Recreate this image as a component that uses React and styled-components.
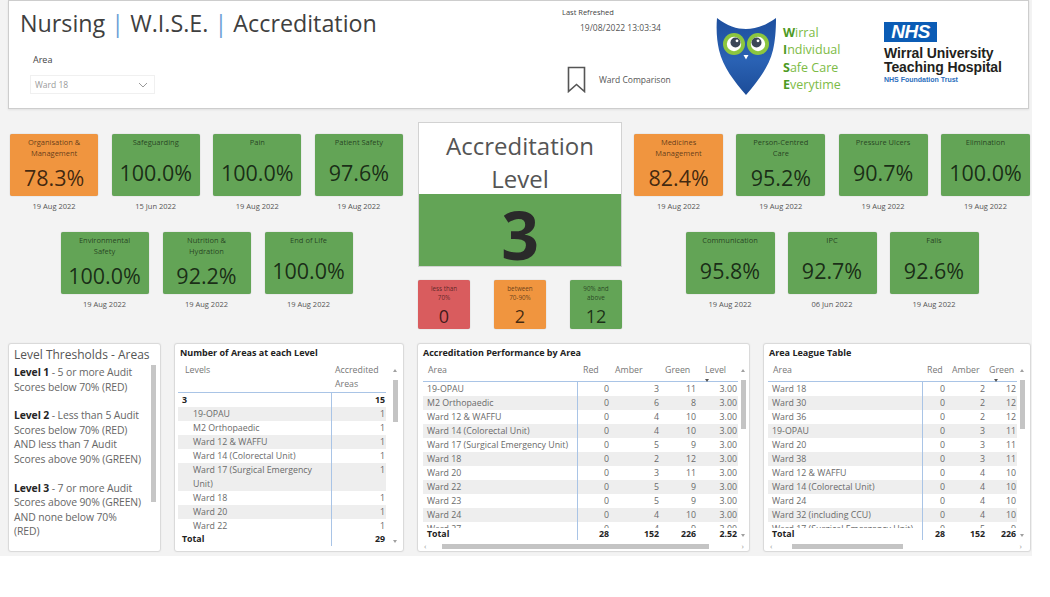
import React from 'react';
import styled, { createGlobalStyle } from 'styled-components';

const GREEN = '#63a456';
const ORANGE = '#f0953f';
const RED = '#d95c5e';
const LINE = '#a9c4e6';

const GlobalStyle = createGlobalStyle`
  * { box-sizing: border-box; }
  html, body { margin: 0; padding: 0; background: #ffffff; }
  body { font-family: "Open Sans", "Noto Sans", sans-serif; color: #333; }
`;

const Canvas = styled.div`
  width: 1032px;
  height: 556px;
  background: #f3f3f3;
  display: flex;
  flex-direction: column;
`;

/* ---------- header ---------- */

const Header = styled.header`
  margin-left: 8px;
  width: 1021px;
  height: 109px;
  background: #fff;
  border: 1px solid #cdcdcd;
  box-shadow: 0 1px 2px rgba(0, 0, 0, 0.08);
  display: flex;
`;

const TitleBlock = styled.div`
  width: 553px;
  padding: 6px 0 0 11px;
`;

const Title = styled.h1`
  margin: 0;
  font-size: 23.3px;
  font-weight: 400;
  line-height: 32px;
  color: #3f3f3f;
  white-space: nowrap;
`;

const Pipe = styled.span`
  color: #6b9fd6;
`;

const AreaLabel = styled.div`
  margin: 15px 0 0 13px;
  font-size: 9px;
  line-height: 12px;
  color: #444;
`;

const Dropdown = styled.div`
  margin: 9px 0 0 10px;
  width: 125px;
  height: 19px;
  border: 1px solid #f0f0f0;
  display: flex;
  align-items: center;
  justify-content: space-between;
  padding: 0 6px 0 4px;
  font-size: 8.5px;
  color: #9a9a9a;
`;

const RefreshBlock = styled.div`
  width: 150px;
  padding-top: 6px;
  font-size: 7.5px;
  line-height: 11px;
  color: #444;
`;

const Stamp = styled.div`
  margin: 4px 0 0 18px;
  font-size: 8.5px;
  line-height: 12px;
  color: #555;
`;

const BookmarkRow = styled.div`
  margin: 32px 0 0 5px;
  display: flex;
  align-items: center;
  gap: 13px;
  font-size: 8.5px;
  color: #555;
`;

const OwlBlock = styled.div`
  width: 172px;
  padding: 16px 0 0 3px;
  display: flex;
  gap: 6px;
`;

const WiseText = styled.div`
  margin-top: 7px;
  font-size: 12.5px;
  line-height: 17.3px;
  color: #7dbb45;
  white-space: nowrap;
`;

const WiseInitial = styled.b`
  color: #4d9a24;
  font-weight: 700;
`;

const NhsBlock = styled.div`
  padding-top: 21px;
  font-family: "Liberation Sans", Arial, sans-serif;
`;

const NhsBox = styled.div`
  width: 53px;
  height: 20px;
  background: #0b5cb5;
  color: #fff;
  font-style: italic;
  font-weight: 700;
  font-size: 19px;
  line-height: 20px;
  text-align: center;
  letter-spacing: -0.5px;
`;

const NhsName = styled.div`
  margin-top: ${(p) => (p.$first ? 4 : 0)}px;
  font-size: 14px;
  font-weight: 700;
  line-height: 14px;
  color: #231f20;
  white-space: nowrap;
  letter-spacing: -0.1px;
`;

const NhsTrust = styled.div`
  margin-top: 1px;
  font-size: 7px;
  font-weight: 700;
  line-height: 10px;
  color: #2a6ebd;
`;

/* ---------- score tiles ---------- */

const Middle = styled.div`
  display: flex;
  margin: 13px 0 0 10px;
  height: 207px;
`;

const TileColumn = styled.div`
  width: ${(p) => p.$w}px;
  padding-top: 12px;
  display: flex;
  flex-direction: column;
  gap: 20px;
`;

const TileRow = styled.div`
  display: flex;
  justify-content: center;
  gap: ${(p) => p.$gap}px;
`;

const TileCell = styled.div`
  display: flex;
  flex-direction: column;
  align-items: center;
`;

const TileBox = styled.div`
  width: ${(p) => p.$w}px;
  height: 62px;
  border-radius: 2px;
  background: ${(p) => p.$color};
  box-shadow: 0 0 1px rgba(0, 0, 0, 0.35);
  display: flex;
  flex-direction: column;
  align-items: center;
  padding-top: 3px;
`;

const TileLabel = styled.div`
  font-size: 7.5px;
  line-height: 11px;
  color: rgba(0, 0, 0, 0.62);
  text-align: center;
  white-space: pre-line;
`;

const TileValue = styled.div`
  flex: 1;
  display: flex;
  align-items: center;
  font-size: 21.5px;
  color: rgba(0, 0, 0, 0.74);
`;

const TileDate = styled.div`
  margin-top: 5px;
  font-size: 7.5px;
  line-height: 11px;
  color: #555;
`;

const Center = styled.div`
  width: 204px;
  margin: 0 12px 0 15px;
  display: flex;
  flex-direction: column;
`;

const AccCard = styled.div`
  height: 146px;
  background: #fff;
  border: 1px solid #d2d2d2;
  display: flex;
  flex-direction: column;
  overflow: hidden;
`;

const AccTitle = styled.div`
  height: 71px;
  padding-top: 6px;
  font-size: 24px;
  line-height: 33px;
  text-align: center;
  color: #555;
`;

const AccLevel = styled.div`
  height: 73px;
  background: ${GREEN};
  display: flex;
  align-items: center;
  justify-content: center;
  padding-top: 7px;
  font-size: 66px;
  line-height: 66px;
  font-weight: 700;
  color: #2a2a2a;
`;

const CountRow = styled.div`
  margin-top: 13px;
  display: flex;
  justify-content: space-between;
`;

const CountTile = styled.div`
  width: 52px;
  height: 49px;
  border-radius: 2px;
  background: ${(p) => p.$color};
  box-shadow: 0 0 1px rgba(0, 0, 0, 0.35);
  display: flex;
  flex-direction: column;
  align-items: center;
  padding-top: 4px;
`;

const CountLabel = styled.div`
  font-size: 6.3px;
  line-height: 9px;
  text-align: center;
  white-space: pre-line;
  color: rgba(0, 0, 0, 0.6);
`;

const CountValue = styled.div`
  flex: 1;
  display: flex;
  align-items: center;
  font-size: 18px;
  color: rgba(0, 0, 0, 0.72);
`;

/* ---------- bottom panels ---------- */

const Bottom = styled.div`
  display: flex;
  gap: 13px;
  margin: 14px 0 0 8px;
  height: 209px;
`;

const Panel = styled.section`
  width: ${(p) => p.$w}px;
  height: 209px;
  background: #fff;
  border: 1px solid #dadada;
  border-radius: 3px;
  box-shadow: 0 0 2px rgba(0, 0, 0, 0.06);
  overflow: hidden;
  display: flex;
  flex-direction: column;
`;

const ThresholdTitle = styled.div`
  padding: 3px 0 0 5px;
  font-size: 12px;
  line-height: 16px;
  color: #555;
  white-space: nowrap;
`;

const ThresholdBody = styled.div`
  display: flex;
  padding: 2px 4px 0 5px;
`;

const ThresholdText = styled.div`
  flex: 1;
  font-size: 10.4px;
  line-height: 14.6px;
  color: #666;
  white-space: nowrap;
  letter-spacing: -0.1px;
`;

const Para = styled.p`
  margin: 0 0 14px;
  b {
    color: #252525;
    font-weight: 700;
  }
`;

const TextThumb = styled.div`
  width: 5px;
  height: 137px;
  background: #c6c6c6;
`;

const TableTitle = styled.div`
  height: 17px;
  padding: 3px 0 0 5px;
  font-size: 9px;
  font-weight: 700;
  line-height: 12px;
  color: #222;
  white-space: nowrap;
`;

const TableWrap = styled.div`
  display: flex;
  padding-left: ${(p) => p.$pad}px;
`;

const TableMain = styled.div`
  display: flex;
  flex-direction: column;
`;

const GridRow = styled.div`
  display: grid;
  grid-template-columns: ${(p) => p.$cols};
  background: ${(p) => (p.$shade ? '#eeeeee' : 'transparent')};
  font-size: 8.8px;
  line-height: ${(p) => p.$lh || 14}px;
  font-weight: ${(p) => (p.$bold ? 700 : 400)};
  color: ${(p) => (p.$bold ? '#222' : '#6a6a6a')};
`;

const HeadRow = styled(GridRow)`
  height: ${(p) => p.$h}px;
  padding-top: 2px;
  border-bottom: 1.5px solid ${LINE};
  color: #777;
`;

const Body = styled.div`
  height: ${(p) => p.$h}px;
  overflow: hidden;
`;

const Cell = styled.div`
  padding: 0 ${(p) => (p.$first ? 2 : 1)}px 0 ${(p) => (p.$first ? 4 + (p.$indent || 0) : 0)}px;
  text-align: ${(p) => (p.$first ? 'left' : 'right')};
  border-right: ${(p) => (p.$first ? `1px solid ${LINE}` : 'none')};
  white-space: ${(p) => (p.$wrap ? 'normal' : 'nowrap')};
`;

const HeadCell = styled.div`
  padding-left: ${(p) => p.$pad ?? 5}px;
  white-space: pre-line;
  position: relative;
`;

const SortMark = styled.span`
  position: absolute;
  left: 8px;
  bottom: -1px;
  border-left: 2.5px solid transparent;
  border-right: 2.5px solid transparent;
  border-top: 3px solid #555;
`;

const VScroll = styled.div`
  width: 6px;
  margin-left: ${(p) => p.$gap || 2}px;
  padding-top: 8px;
  display: flex;
  flex-direction: column;
  align-items: center;
`;

const Track = styled.div`
  flex: 1;
  width: 5px;
`;

const Thumb = styled.div`
  width: 5px;
  height: ${(p) => p.$h}px;
  margin-top: ${(p) => p.$top}px;
  background: #c4c4c4;
`;

const ArrowUp = styled.div`
  border-left: 2.5px solid transparent;
  border-right: 2.5px solid transparent;
  border-bottom: 3px solid #a0a0a0;
`;

const ArrowDown = styled.div`
  margin-bottom: 3px;
  border-left: 2.5px solid transparent;
  border-right: 2.5px solid transparent;
  border-top: 3px solid #a0a0a0;
`;

const HScroll = styled.div`
  display: flex;
  align-items: center;
  height: 8px;
  margin: 2px 0 0 ${(p) => p.$pad}px;
  width: ${(p) => p.$w}px;
  font-size: 8px;
  line-height: 8px;
  color: #999;
`;

const HTrack = styled.div`
  flex: 1;
  margin: 0 6px;
  height: 5px;
`;

const HThumb = styled.div`
  height: 5px;
  margin-left: ${(p) => p.$left}px;
  width: ${(p) => p.$w}px;
  background: #c4c4c4;
`;

/* ---------- data ---------- */

const leftRows = [
  [
    { label: 'Organisation &\nManagement', value: '78.3%', date: '19 Aug 2022', color: ORANGE },
    { label: 'Safeguarding', value: '100.0%', date: '15 Jun 2022', color: GREEN },
    { label: 'Pain', value: '100.0%', date: '19 Aug 2022', color: GREEN },
    { label: 'Patient Safety', value: '97.6%', date: '19 Aug 2022', color: GREEN },
  ],
  [
    { label: 'Environmental\nSafety', value: '100.0%', date: '19 Aug 2022', color: GREEN },
    { label: 'Nutrition &\nHydration', value: '92.2%', date: '19 Aug 2022', color: GREEN },
    { label: 'End of Life', value: '100.0%', date: '19 Aug 2022', color: GREEN },
  ],
];

const rightRows = [
  [
    { label: 'Medicines\nManagement', value: '82.4%', date: '19 Aug 2022', color: ORANGE },
    { label: 'Person-Centred\nCare', value: '95.2%', date: '19 Aug 2022', color: GREEN },
    { label: 'Pressure Ulcers', value: '90.7%', date: '19 Aug 2022', color: GREEN },
    { label: 'Elimination', value: '100.0%', date: '19 Aug 2022', color: GREEN },
  ],
  [
    { label: 'Communication', value: '95.8%', date: '19 Aug 2022', color: GREEN },
    { label: 'IPC', value: '92.7%', date: '06 Jun 2022', color: GREEN },
    { label: 'Falls', value: '92.6%', date: '19 Aug 2022', color: GREEN },
  ],
];

const counts = [
  { label: 'less than\n70%', value: 0, color: RED },
  { label: 'between\n70-90%', value: 2, color: ORANGE },
  { label: '90% and\nabove', value: 12, color: GREEN },
];

const levelRows = [
  ['19-OPAU', 1],
  ['M2 Orthopaedic', 1],
  ['Ward 12 & WAFFU', 1],
  ['Ward 14 (Colorectal Unit)', 1],
  ['Ward 17 (Surgical Emergency Unit)', 1],
  ['Ward 18', 1],
  ['Ward 20', 1],
  ['Ward 22', 1],
];

const perfRows = [
  ['19-OPAU', 0, 3, 11, '3.00'],
  ['M2 Orthopaedic', 0, 6, 8, '3.00'],
  ['Ward 12 & WAFFU', 0, 4, 10, '3.00'],
  ['Ward 14 (Colorectal Unit)', 0, 4, 10, '3.00'],
  ['Ward 17 (Surgical Emergency Unit)', 0, 5, 9, '3.00'],
  ['Ward 18', 0, 2, 12, '3.00'],
  ['Ward 20', 0, 3, 11, '3.00'],
  ['Ward 22', 0, 5, 9, '3.00'],
  ['Ward 23', 0, 5, 9, '3.00'],
  ['Ward 24', 0, 4, 10, '3.00'],
  ['Ward 27', 0, 4, 9, '3.00'],
];

const leagueRows = [
  ['Ward 18', 0, 2, 12],
  ['Ward 30', 0, 2, 12],
  ['Ward 36', 0, 2, 12],
  ['19-OPAU', 0, 3, 11],
  ['Ward 20', 0, 3, 11],
  ['Ward 38', 0, 3, 11],
  ['Ward 12 & WAFFU', 0, 4, 10],
  ['Ward 14 (Colorectal Unit)', 0, 4, 10],
  ['Ward 24', 0, 4, 10],
  ['Ward 32 (including CCU)', 0, 4, 10],
  ['Ward 17 (Surgical Emergency Unit)', 0, 5, 9],
];

/* ---------- drawings ---------- */

function Owl() {
  return (
    <svg width="62" height="79" viewBox="0 0 62 79">
      <defs>
        <linearGradient id="owlBlue" x1="0" y1="0" x2="0" y2="1">
          <stop offset="0" stopColor="#1e4f9e" />
          <stop offset="0.55" stopColor="#2a62b4" />
          <stop offset="1" stopColor="#1c4c98" />
        </linearGradient>
      </defs>
      <path
        d="M2 1 C 12 9, 22 12, 31 12 C 40 12, 50 9, 61 1 C 61 14, 60 24, 58 33 C 54 50, 43 64, 31 78 C 19 64, 8 50, 4 33 C 2 24, 1 14, 2 1 Z"
        fill="url(#owlBlue)"
      />
      <circle cx="19" cy="27" r="11" fill="#8cc63f" />
      <circle cx="43" cy="27" r="11" fill="#8cc63f" />
      <circle cx="19" cy="27" r="7.2" fill="#ffffff" />
      <circle cx="43" cy="27" r="7.2" fill="#ffffff" />
      <circle cx="20.5" cy="25.5" r="5" fill="#3b4657" />
      <circle cx="41.5" cy="25.5" r="5" fill="#3b4657" />
      <circle cx="22" cy="23.8" r="1.4" fill="#ffffff" />
      <circle cx="43" cy="23.8" r="1.4" fill="#ffffff" />
      <path d="M28.5 38 L33.5 38 L31 42.5 Z" fill="#ffffff" />
    </svg>
  );
}

function BookmarkIcon() {
  return (
    <svg width="19" height="27" viewBox="0 0 19 27">
      <path d="M1.5 1.5 H17.5 V25.5 L9.5 18.5 L1.5 25.5 Z" fill="none" stroke="#555" strokeWidth="1.6" />
    </svg>
  );
}

function Chevron() {
  return (
    <svg width="10" height="6" viewBox="0 0 10 6">
      <polyline points="1,1 5,5 9,1" fill="none" stroke="#999" strokeWidth="1" />
    </svg>
  );
}

/* ---------- pieces ---------- */

function TileGroup({ rows, width, tileW, gaps }) {
  return (
    <TileColumn $w={width}>
      {rows.map((row, r) => (
        <TileRow key={r} $gap={gaps[r]}>
          {row.map((t) => (
            <TileCell key={t.label}>
              <TileBox $color={t.color} $w={tileW}>
                <TileLabel>{t.label}</TileLabel>
                <TileValue>{t.value}</TileValue>
              </TileBox>
              <TileDate>{t.date}</TileDate>
            </TileCell>
          ))}
        </TileRow>
      ))}
    </TileColumn>
  );
}

function ScrollBar({ top, h, gap }) {
  return (
    <VScroll $gap={gap}>
      <ArrowUp />
      <Track>
        <Thumb $top={top} $h={h} />
      </Track>
      <ArrowDown />
    </VScroll>
  );
}

function LevelsPanel() {
  const cols = '154px 54px';
  return (
    <Panel $w={230}>
      <TableTitle>Number of Areas at each Level</TableTitle>
      <TableWrap $pad={3}>
        <TableMain>
          <HeadRow $cols={cols} $h={32}>
            <HeadCell $pad={7}>Levels</HeadCell>
            <HeadCell $pad={3}>{'Accredited\nAreas'}</HeadCell>
          </HeadRow>
          <Body $h={140}>
            <GridRow $cols={cols} $bold>
              <Cell $first>3</Cell>
              <Cell>15</Cell>
            </GridRow>
            {levelRows.map(([name, n], i) => (
              <GridRow key={name} $cols={cols} $shade={i % 2 === 0}>
                <Cell $first $indent={11} $wrap>{name}</Cell>
                <Cell>{n}</Cell>
              </GridRow>
            ))}
          </Body>
          <GridRow $cols={cols} $bold $lh={13}>
            <Cell $first>Total</Cell>
            <Cell>29</Cell>
          </GridRow>
        </TableMain>
        <ScrollBar top={8} h={42} gap={6} />
      </TableWrap>
    </Panel>
  );
}

function PerfPanel() {
  const cols = '155px 32px 50px 37px 41px';
  return (
    <Panel $w={333}>
      <TableTitle>Accreditation Performance by Area</TableTitle>
      <TableWrap $pad={5}>
        <TableMain>
          <HeadRow $cols={cols} $h={21}>
            <HeadCell>Area</HeadCell>
            <HeadCell>Red</HeadCell>
            <HeadCell>Amber</HeadCell>
            <HeadCell>Green</HeadCell>
            <HeadCell $pad={8}>
              Level
              <SortMark />
            </HeadCell>
          </HeadRow>
          <Body $h={146}>
            {perfRows.map((r, i) => (
              <GridRow key={r[0]} $cols={cols} $shade={i % 2 === 1}>
                <Cell $first>{r[0]}</Cell>
                <Cell>{r[1]}</Cell>
                <Cell>{r[2]}</Cell>
                <Cell>{r[3]}</Cell>
                <Cell>{r[4]}</Cell>
              </GridRow>
            ))}
          </Body>
          <GridRow $cols={cols} $bold $lh={12}>
            <Cell $first>Total</Cell>
            <Cell>28</Cell>
            <Cell>152</Cell>
            <Cell>226</Cell>
            <Cell>2.52</Cell>
          </GridRow>
        </TableMain>
        <ScrollBar top={8} h={49} />
      </TableWrap>
      <HScroll $pad={6} $w={320}>
        ‹
        <HTrack>
          <HThumb $left={10} $w={267} />
        </HTrack>
        ›
      </HScroll>
    </Panel>
  );
}

function LeaguePanel() {
  const cols = '155px 23px 40px 31px';
  return (
    <Panel $w={268}>
      <TableTitle>Area League Table</TableTitle>
      <TableWrap $pad={4}>
        <TableMain>
          <HeadRow $cols={cols} $h={21}>
            <HeadCell>Area</HeadCell>
            <HeadCell $pad={4}>Red</HeadCell>
            <HeadCell $pad={6}>Amber</HeadCell>
            <HeadCell $pad={3}>
              Green
              <SortMark />
            </HeadCell>
          </HeadRow>
          <Body $h={146}>
            {leagueRows.map((r, i) => (
              <GridRow key={r[0]} $cols={cols} $shade={i % 2 === 1}>
                <Cell $first>{r[0]}</Cell>
                <Cell>{r[1]}</Cell>
                <Cell>{r[2]}</Cell>
                <Cell>{r[3]}</Cell>
              </GridRow>
            ))}
          </Body>
          <GridRow $cols={cols} $bold $lh={12}>
            <Cell $first>Total</Cell>
            <Cell>28</Cell>
            <Cell>152</Cell>
            <Cell>226</Cell>
          </GridRow>
        </TableMain>
        <ScrollBar top={8} h={49} />
      </TableWrap>
      <HScroll $pad={6} $w={252}>
        ‹
        <HTrack>
          <HThumb $left={14} $w={111} />
        </HTrack>
        ›
      </HScroll>
    </Panel>
  );
}

export default function App() {
  return (
    <>
      <GlobalStyle />
      <Canvas>
        <Header>
          <TitleBlock>
            <Title>
              Nursing <Pipe>|</Pipe> W.I.S.E. <Pipe>|</Pipe> Accreditation
            </Title>
            <AreaLabel>Area</AreaLabel>
            <Dropdown>
              Ward 18
              <Chevron />
            </Dropdown>
          </TitleBlock>
          <RefreshBlock>
            Last Refreshed
            <Stamp>19/08/2022 13:03:34</Stamp>
            <BookmarkRow>
              <BookmarkIcon />
              Ward Comparison
            </BookmarkRow>
          </RefreshBlock>
          <OwlBlock>
            <Owl />
            <WiseText>
              <div><WiseInitial>W</WiseInitial>irral</div>
              <div><WiseInitial>I</WiseInitial>ndividual</div>
              <div><WiseInitial>S</WiseInitial>afe Care</div>
              <div><WiseInitial>E</WiseInitial>verytime</div>
            </WiseText>
          </OwlBlock>
          <NhsBlock>
            <NhsBox>NHS</NhsBox>
            <NhsName $first>Wirral University</NhsName>
            <NhsName>Teaching Hospital</NhsName>
            <NhsTrust>NHS Foundation Trust</NhsTrust>
          </NhsBlock>
        </Header>

        <Middle>
          <TileGroup rows={leftRows} width={393} tileW={88} gaps={[13.6, 14]} />
          <Center>
            <AccCard>
              <AccTitle>
                Accreditation
                <br />
                Level
              </AccTitle>
              <AccLevel>3</AccLevel>
            </AccCard>
            <CountRow>
              {counts.map((c) => (
                <CountTile key={c.label} $color={c.color}>
                  <CountLabel>{c.label}</CountLabel>
                  <CountValue>{c.value}</CountValue>
                </CountTile>
              ))}
            </CountRow>
          </Center>
          <TileGroup rows={rightRows} width={396} tileW={89} gaps={[13.3, 13]} />
        </Middle>

        <Bottom>
          <Panel $w={153}>
            <ThresholdTitle>Level Thresholds - Areas</ThresholdTitle>
            <ThresholdBody>
              <ThresholdText>
                <Para>
                  <b>Level 1</b> - 5 or more Audit
                  <br />
                  Scores below 70% (RED)
                </Para>
                <Para>
                  <b>Level 2</b> - Less than 5 Audit
                  <br />
                  Scores below 70% (RED)
                  <br />
                  AND less than 7 Audit
                  <br />
                  Scores above 90% (GREEN)
                </Para>
                <Para>
                  <b>Level 3</b> - 7 or more Audit
                  <br />
                  Scores above 90% (GREEN)
                  <br />
                  AND none below 70%
                  <br />
                  (RED)
                </Para>
              </ThresholdText>
              <TextThumb />
            </ThresholdBody>
          </Panel>
          <LevelsPanel />
          <PerfPanel />
          <LeaguePanel />
        </Bottom>
      </Canvas>
    </>
  );
}
